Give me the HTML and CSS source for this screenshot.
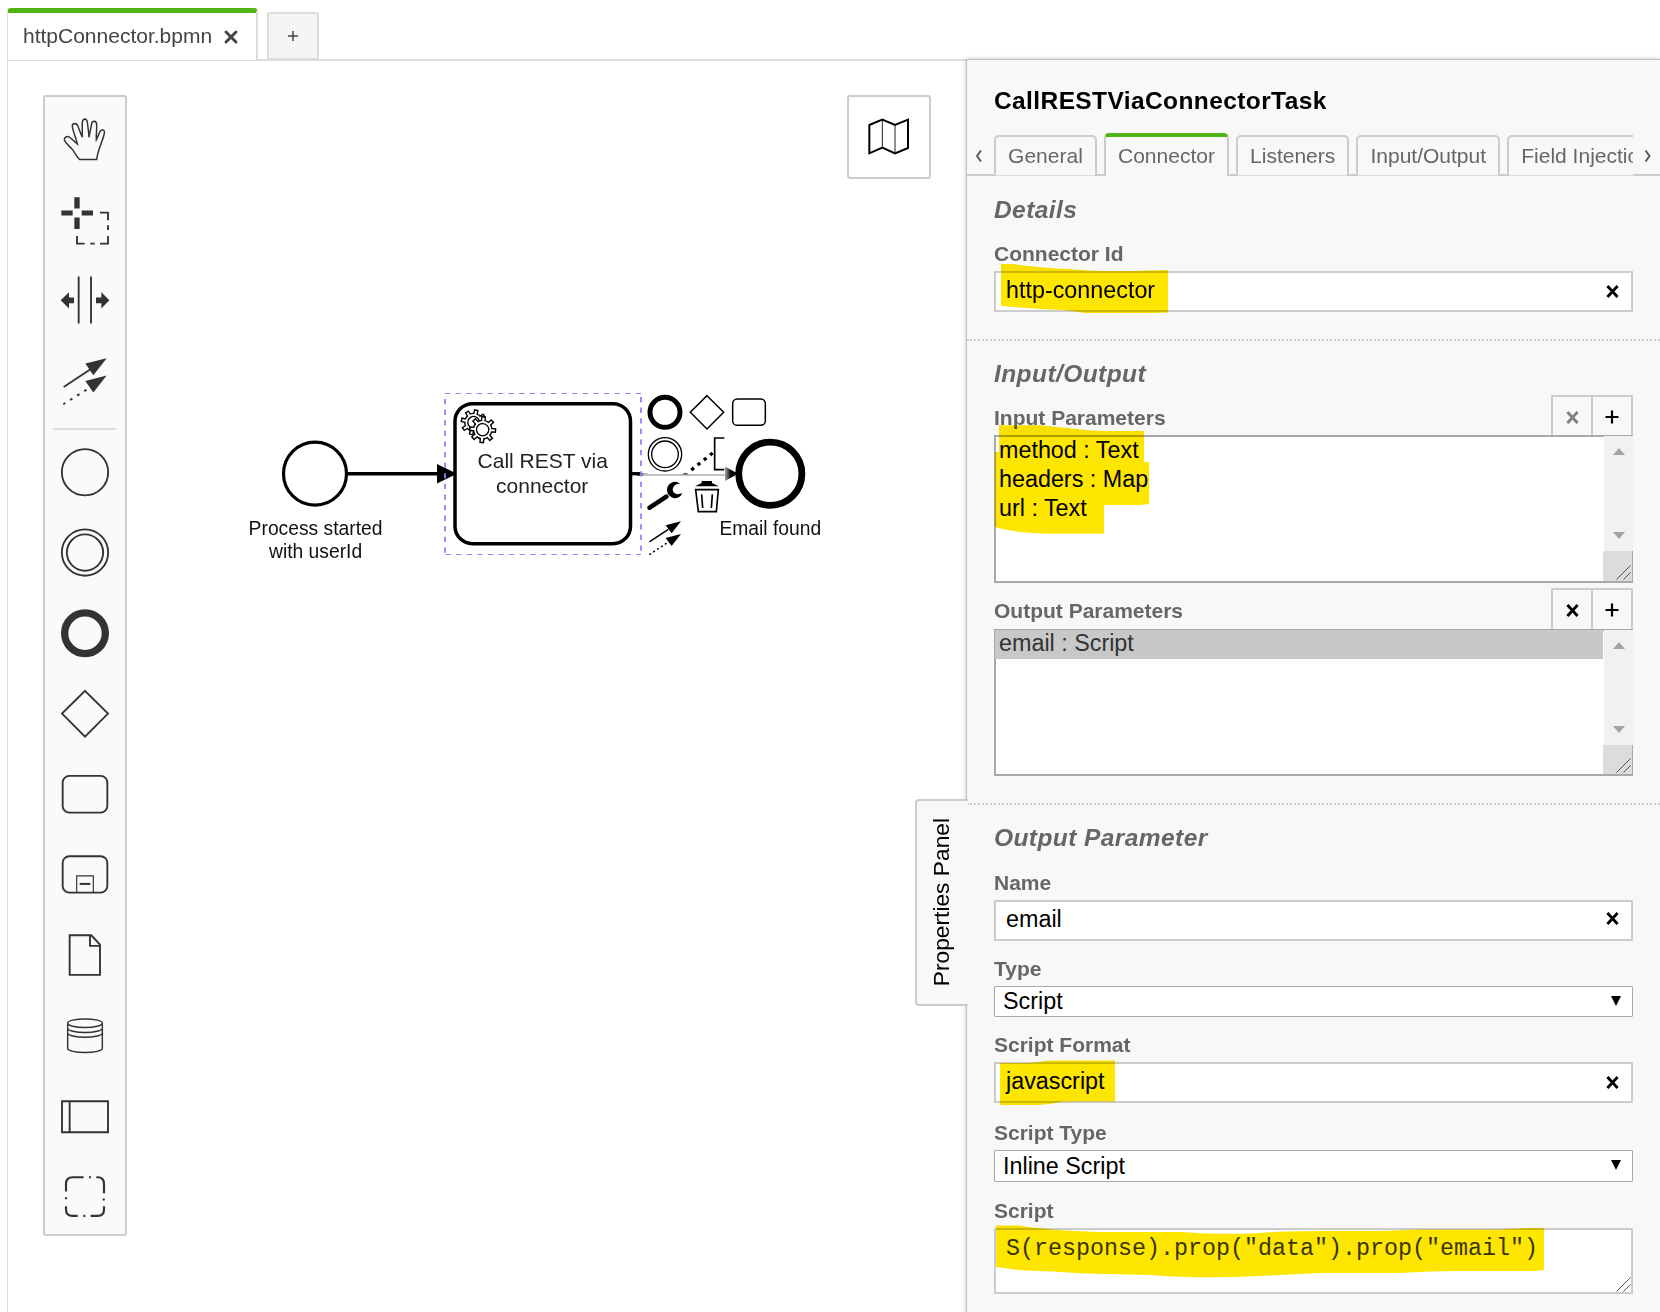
FILE: index.html
```html
<!DOCTYPE html>
<html lang="en">
<head>
<meta charset="utf-8">
<title>httpConnector.bpmn</title>
<link rel="stylesheet" href="styles.css">
</head>
<body>
<svg class="defs" width="0" height="0">
  <symbol id="cross" viewBox="0 0 12 12"><path d="M1.3 .9L10.7 11.1M10.7 .9L1.3 11.1" fill="none" stroke="currentColor" stroke-width="2.6"/></symbol>
  <symbol id="plus" viewBox="0 0 14 14"><path d="M0.500 7H13.500M7 0.500V13.500" fill="none" stroke="currentColor" stroke-width="2.200"/></symbol>
  <symbol id="grip" viewBox="0 0 15 15"><path d="M.5 14.500L14.500 .5M7.500 14.500L14.500 7.500" fill="none" stroke="#555" stroke-width="1"/></symbol>
</svg>

<header class="file-tabs">
  <div class="file-tab"><span>httpConnector.bpmn</span><svg class="file-close" viewBox="0 0 14 14"><path d="M2 2L12 12M12 2L2 12" fill="none" stroke="#444" stroke-width="2.900" stroke-linecap="round"/></svg></div>
  <div class="file-rest"><div class="file-add"><svg width="10" height="10" viewBox="0 0 10 10"><path d="M0 5H10M5 0V10" stroke="#444" stroke-width="1.500"/></svg></div></div>
</header>

<main class="editor">
  <section class="canvas">
    <svg class="diagram" viewBox="8 61 958 1251">
      <defs>
        <linearGradient id="fadeOut" gradientUnits="userSpaceOnUse" x1="638" y1="0" x2="648" y2="0"><stop offset="0" stop-color="#000"/><stop offset="1" stop-color="#c4c4c4"/></linearGradient>
        <linearGradient id="fadeIn" gradientUnits="userSpaceOnUse" x1="723" y1="0" x2="731" y2="0"><stop offset="0" stop-color="#ddd"/><stop offset="1" stop-color="#000"/></linearGradient>
        <g id="gear">
          <circle r="31" fill="#000"/>
          <g stroke="#000" stroke-width="15"><path d="M0-42V42M-42 0H42M-29.700-29.700L29.700 29.700M29.700-29.700L-29.700 29.700"/></g>
          <circle r="26.500" fill="#fff"/>
          <g stroke="#fff" stroke-width="6.500"><path d="M0-37.500V37.500M-37.500 0H37.500M-26.500-26.500L26.500 26.500M26.500-26.500L-26.500 26.500"/></g>
          <circle r="19" fill="#fff" stroke="#000" stroke-width="4"/>
        </g>
      </defs>

      <circle cx="315" cy="473.700" r="31.500" fill="#fff" stroke="#000" stroke-width="3.200"/>
      <path d="M348 473.700H440" stroke="#000" stroke-width="3.600"/>
      <path d="M437 464L457 473.700L437 483.500Z"/>
      <text class="caption" x="315.600" y="534.700">Process started</text>
      <text class="caption" x="315.600" y="557.700">with userId</text>

      <rect x="455" y="403.700" width="175.500" height="140" rx="17.500" fill="#fff" stroke="#000" stroke-width="3.500"/>
      <g transform="translate(430 380) scale(.33333)"><use href="#gear" transform="translate(131 127) rotate(12) scale(.93)"/><use href="#gear" transform="translate(158 149) rotate(4) scale(.97)"/></g>
      <text class="task-name" x="542.700" y="467.700">Call REST via</text>
      <text class="task-name" x="542.200" y="492.700">connector</text>

      <path d="M632 473.700H642" stroke="#000" stroke-width="3.300"/>
      <path d="M638 474H648V475H638Z" stroke="url(#fadeOut)" stroke-width="1.500"/>
      <path d="M643 475H730" stroke="#c4c4c4" stroke-width="2"/>
      <path d="M682 474.500Q685.500 471 689 474.500Z" fill="#555"/>
      <path d="M725 466.500L738 473.700L725 481Z" fill="url(#fadeIn)"/>
      <circle cx="770.300" cy="473.700" r="31.600" fill="#fff" stroke="#000" stroke-width="6.800"/>
      <text class="caption" x="770.300" y="535">Email found</text>

      <g stroke="#8888ff" fill="none" stroke-dasharray="5.300 5.300">
        <path d="M445 393.500H641M445.500 554.500H641" stroke-width="1"/>
        <path d="M445 399V554M641 397V554" stroke-width="1.800"/>
      </g>

      <g transform="translate(430 380) scale(.33333)" fill="none" stroke="#000">
        <circle cx="705" cy="97" r="45" stroke-width="15"/>
        <path d="M831 47L881 97L831 147L781 97Z" stroke-width="4.500"/>
        <rect x="908" y="57" width="98" height="79" rx="14" stroke-width="4.500"/>
        <circle cx="705" cy="223" r="50" stroke-width="4"/>
        <circle cx="705" cy="223" r="40" stroke-width="4"/>
        <path d="M883 174H854V269H883" stroke-width="5"/>
        <path d="M784 270L848 219" stroke-width="10" stroke-dasharray="10 14"/>
        <path d="M659 383L709 350" stroke-width="14" stroke-linecap="round"/>
        <path d="M750 311A24 24 0 0 0 711 330A24 24 0 0 0 757 340L742 343Q728 340 728 328Q730 316 742 312Z" fill="#000" stroke="none"/>
        <path d="M815 303H846V309L866 319H795L815 309Z" fill="#000" stroke="none"/>
        <path d="M797 329H865L859 395H805ZM815 343L818 384M847 343L844 384" stroke-width="5"/>
        <path d="M658 486L715 448" stroke-width="4.500"/>
        <path d="M658 524L715 486" stroke-width="4.500" stroke-dasharray="6 8"/>
        <path d="M753 424L707 436L725 460ZM753 462L707 474L725 498Z" fill="#000" stroke="none"/>
      </g>
    </svg>

    <nav class="palette">
      <svg class="entry" viewBox="135 297 240 240"><path stroke-width="4.500" d="M239 478H290C292 457 300 440 306 422C311 408 315 398 313 393C311 387 303 388 300 394C296 402 293 410 289 418C288 400 291 385 290 372C289 361 277 360 275 370C273 382 270 395 267 411C266 395 264 380 262 366C260 353 249 353 247 366C246 380 247 395 247 411C241 398 238 388 233 376C229 367 216 369 217 378C219 396 228 412 232 431C224 424 216 417 209 411C202 406 192 411 193 419C198 432 210 438 218 449C226 460 230 469 239 478Z"/></svg>
      <svg class="entry" viewBox="135 539 240 240"><path class="solid" d="M223 590H239V624H223ZM223 651H239V685H223ZM184 630H218V645H184ZM245 630H279V645H245Z"/><path d="M300 636H324V659M324 674V688M324 706V729H300M284 729H271M254 729H231V706"/></svg>
      <svg class="entry" viewBox="45 1 240 240"><path d="M146 50V191M183 50V191"/><path class="solid" d="M92 121L117 97V113H132V130H117V146ZM238 121L214 97V113H198V130H214V146Z"/></svg>
      <svg class="entry" viewBox="45 243 240 240"><path d="M101 380L185 325"/><path d="M100 432L172 387" stroke-dasharray="8 17" stroke-width="6" stroke-dashoffset="1"/><path class="solid" d="M230 294L166 310L190 345ZM230 346L166 362L190 397Z"/></svg>
      <hr class="palette-line">
      <svg class="entry" viewBox="45 517 240 240"><circle cx="165" cy="637" r="69.500"/></svg>
      <svg class="entry" viewBox="45 759 240 240"><circle cx="165" cy="877" r="69.500"/><circle cx="165" cy="877" r="54.500"/></svg>
      <svg class="entry" viewBox="45 1000 240 240"><circle cx="165" cy="1120" r="61" stroke-width="22"/></svg>
      <svg class="entry" viewBox="45 12 240 240"><path d="M165 62L234 130L165 199L96 130Z"/></svg>
      <svg class="entry" viewBox="45 253 240 240"><rect x="98" y="318" width="134" height="110" rx="20"/></svg>
      <svg class="entry" viewBox="45 495 240 240"><rect x="98" y="558" width="134" height="109" rx="20"/><path d="M140 667V617H190V667" stroke-width="3.500"/><path d="M149 641H181" stroke-width="6"/></svg>
      <svg class="entry" viewBox="45 736 240 240"><path d="M119 796H184L210 824V915H119ZM180 796V828H210"/></svg>
      <svg class="entry" viewBox="45 108 240 240"><path stroke-width="4.300" d="M113 188A52 12 0 0 1 217 188V265A52 12 0 0 1 113 265ZM113 188A52 14 0 0 0 217 188M113 204A52 13 0 0 0 217 204M113 218A52 13 0 0 0 217 218"/></svg>
      <svg class="entry" viewBox="45 349 240 240"><path d="M96 424H234V517H96ZM119 424V517"/></svg>
      <svg class="entry" viewBox="45 591 240 240"><path stroke-width="6.500" d="M161 651H128Q108 651 108 671V694M108 711V717M108 738V748Q108 767 128 767H143M160 767H166M182 767H203Q222 767 222 748V738M221 721V715M222 699V671Q222 651 203 651H199M183 651H177"/></svg>
    </nav>

    <div class="minimap"><svg viewBox="27 141 240 240" width="80" height="80"><path d="M88 225L127 209L165 225L204 209V294L165 310L127 293L88 310Z" fill="none" stroke="#000" stroke-width="6"/><path d="M127 209V293M165 225V310" stroke="#222" stroke-width="3"/></svg></div>

    <div class="panel-toggle"><span>Properties Panel</span></div>
  </section>

  <aside class="panel">
    <h1 class="title">CallRESTViaConnectorTask</h1>
    <div class="tabs">
      <div class="scroll"><svg width="8" height="14" viewBox="0 0 8 14"><path d="M6 1.500L2 7L6 12.500" fill="none" stroke="#555" stroke-width="1.900"/></svg></div>
      <div class="tab-strip">
        <div class="tab">General</div><i></i><div class="tab active">Connector</div><i></i><div class="tab">Listeners</div><i></i><div class="tab">Input/Output</div><i></i><div class="tab">Field Injections</div>
      </div>
      <div class="scroll end"><svg width="8" height="14" viewBox="0 0 8 14"><path d="M1.500 1.500L5.500 7L1.500 12.500" fill="none" stroke="#555" stroke-width="1.900"/></svg></div>
    </div>

    <section class="group details">
      <h2>Details</h2>
      <div class="field first">
        <label>Connector Id</label>
        <div class="input">http-connector<svg class="x"><use href="#cross"/></svg>
          <svg class="marker" viewBox="994 271 639 41"><path d="M1001 264H1013C1040 268 1070 269 1100 271L1130 271L1168 270V312.500L1150 313H1085C1070 310 1055 309.500 1040 309L1001 306Z"/></svg></div>
      </div>
    </section>

    <section class="group io">
      <h2>Input/Output</h2>
      <div class="list-head one"><label>Input Parameters</label><div class="buttons"><span class="off"><svg class="x"><use href="#cross"/></svg></span><span><svg class="p"><use href="#plus"/></svg></span></div></div>
      <div class="listbox">
        <ul><li>method : Text</li><li>headers : Map</li><li>url : Text</li></ul>
        <div class="bar"><b class="up"></b><b class="down"></b><div class="corner"><svg width="15" height="15"><use href="#grip"/></svg></div></div>
        <svg class="marker" viewBox="994 435 639 148"><path d="M999 425.300H1040C1060 427 1080 430 1100 431H1144V462H1149V504L1140 505H1104V533.700H1050Q1015 533 995 527V452H999Z"/></svg>
      </div>
      <div class="list-head two"><label>Output Parameters</label><div class="buttons"><span><svg class="x"><use href="#cross"/></svg></span><span><svg class="p"><use href="#plus"/></svg></span></div></div>
      <div class="listbox short">
        <ul><li class="selected">email : Script</li></ul>
        <div class="bar"><b class="up"></b><b class="down"></b><div class="corner"><svg width="15" height="15"><use href="#grip"/></svg></div></div>
      </div>
    </section>

    <section class="group param">
      <h2>Output Parameter</h2>
      <div class="field name">
        <label>Name</label>
        <div class="input">email<svg class="x raised"><use href="#cross"/></svg></div>
      </div>
      <div class="field">
        <label>Type</label>
        <div class="select">Script<svg class="arrow" viewBox="0 0 10 10"><path d="M0 0H10L5 10Z"/></svg></div>
      </div>
      <div class="field">
        <label>Script Format</label>
        <div class="input">javascript<svg class="x"><use href="#cross"/></svg>
          <svg class="marker" viewBox="994 1062 639 41"><path d="M1000 1063H1028Q1040 1062 1048 1060.500H1115V1101.500H1063Q1050 1104.500 1038 1105H1000Z"/></svg></div>
      </div>
      <div class="field wide">
        <label>Script Type</label>
        <div class="select tall">Inline Script<svg class="arrow" viewBox="0 0 10 10"><path d="M0 0H10L5 10Z"/></svg></div>
      </div>
      <div class="field script">
        <label>Script</label>
        <div class="textarea"><code>S(response).prop("data").prop("email")</code><svg class="grip" width="15" height="15"><use href="#grip"/></svg>
          <svg class="marker" viewBox="994 1228 639 66"><path d="M996 1225.500H1018C1040 1229 1070 1231 1097 1232H1180C1200 1233 1220 1235 1260 1233Q1280 1231 1320 1231L1380 1231L1420 1229.500H1500L1528 1228H1544V1270L1535 1271H1460Q1430 1271 1400 1273H1320L1260 1276Q1200 1279 1150 1275L1085 1273.500Q1050 1271 1025 1270.500Q1010 1269 996 1267Z"/></svg></div>
      </div>
    </section>
  </aside>
</main>
</body>
</html>
```
FILE: styles.css
```css
* { box-sizing: border-box; }
body { margin: 0; width: 1660px; height: 1312px; overflow: hidden; background: #fff; font-family: "Liberation Sans", Arial, sans-serif; color: #000; }
svg { display: block; overflow: visible; }
.defs { position: absolute; }

/* file tabs */
.file-tabs { display: flex; height: 61px; padding: 8px 0 0 7px; }
.file-tab { display: flex; align-items: center; width: 251px; padding: 0 0 1px 15px; border: solid #ddd; border-width: 5px 2px 1px 1px; border-top-color: #52b415; border-radius: 4px 4px 0 0; font-size: 21px; color: #444; }
.file-close { width: 14px; height: 14px; margin: 1px 0 0 12px; }
.file-rest { flex: 1; border-bottom: 2px solid #ddd; padding: 4px 0 0 9px; }
.file-add { display: flex; align-items: center; justify-content: center; width: 52px; height: 48px; border: 2px solid #ddd; border-radius: 3px 3px 0 0; background: #f5f5f5; }

.editor { display: flex; height: 1251px; padding-left: 7px; }
.canvas { position: relative; width: 959px; border-left: 1px solid #ddd; }
.diagram { width: 958px; height: 1251px; }
.caption { font-size: 19.3px; text-anchor: middle; fill: #111; }
.task-name { font-size: 21px; text-anchor: middle; fill: #222; }

/* palette */
.palette { position: absolute; left: 35px; top: 34px; width: 84px; height: 1141px; padding-top: 2px; border: 2px solid #ccc; border-radius: 3px; background: #fafafa; }
.entry { width: 80px; height: 80.5px; fill: none; stroke: #333; stroke-width: 5.6; }
.entry .solid { fill: #333; stroke: none; }
.palette-line { width: 63px; height: 2px; margin: 7px auto 2px 8px; border: 0; background: #ddd; }

.minimap { position: absolute; left: 839px; top: 34px; width: 84px; height: 84px; border: 2px solid #ccc; border-radius: 3px; background: #fff; }
.panel-toggle { position: absolute; z-index: 2; left: 907px; top: 738px; width: 53px; height: 207px; padding-right: 2px; display: flex; justify-content: center; align-items: center; border: 2px solid #ccc; border-right: 0; border-radius: 4px 0 0 4px; background: #f8f8f8; font-size: 22.75px; }
.panel-toggle span { writing-mode: vertical-rl; transform: rotate(180deg); }

/* properties panel */
.panel { flex: 1; margin-top: -2px; height: 1253px; padding-top: 27px; border: solid #c0c0c0; border-width: 1px 0 0 1px; background: #f8f8f8; box-shadow: 0 0 4px rgba(0,0,0,.25); }
.title { margin: 0 0 0 27px; font-size: 24.5px; line-height: 28px; letter-spacing: .4px; }
.tabs { display: flex; height: 43px; margin-top: 18px; }
.scroll { width: 27px; padding: 16px 0 0 8px; border-bottom: 2px solid #ccc; }
.scroll.end { padding-left: 11px; }
.tab-strip { display: flex; width: 639px; overflow: hidden; align-items: flex-end; font-size: 21px; color: #666; }
.tab-strip i { flex: none; width: 7px; border-bottom: 2px solid #ccc; }
.tab { flex: none; height: 41px; padding: 0 12.1px; border: solid #ccc; border-width: 2px 2px 0; border-radius: 5px 5px 0 0; line-height: 38px; box-shadow: inset 0 -1px #ddd; }
.tab.active { height: 43px; border-top: 4px solid #52b415; box-shadow: none; }

.group { padding: 0 27px; }
.group + .group { border-top: 2px dotted #ccc; }
.details { height: 163px; padding-top: 20px; }
.io { height: 464px; padding-top: 19px; }
.param { padding-top: 19px; }
h2 { margin: 0; font-size: 24.5px; line-height: 28px; font-style: italic; letter-spacing: .42px; color: #666; }
label { display: block; font-size: 21px; line-height: 24px; font-weight: bold; color: #666; }
.field { margin-top: 16px; }
.field label { margin-bottom: 5px; }
.field.first { margin-top: 18px; }
.field.name { margin-top: 19px; }
.field.wide { margin-top: 18px; }
.field.script { margin-top: 17px; }
.input, .select, .textarea, .listbox { position: relative; width: 639px; background: #fff; font-size: 23.33px; }
.input { display: flex; align-items: center; justify-content: space-between; height: 41px; padding: 0 12px 2px 10px; border: 2px solid #ccc; line-height: 35px; }
.x { width: 13px; height: 13px; margin-top: 1px; }
.raised { margin: 0 0 2px; }
.p { width: 14px; height: 14px; }
.select { display: flex; align-items: center; justify-content: space-between; height: 31px; padding: 0 11px 0 8px; border: 1px solid #a9a9a9; border-radius: 1px; }
.select.tall { height: 32px; }
.arrow { width: 10px; height: 10px; margin-bottom: 2px; }
.textarea { height: 66px; padding: 4px 10px; border: 2px solid #ccc; }
.textarea code { font: 23.33px/26px "Liberation Mono", monospace; color: #3a3a3a; }
.textarea .grip { position: absolute; right: 0; bottom: 0; }

.list-head { display: flex; justify-content: space-between; align-items: flex-start; }
.list-head label { padding-top: 11px; }
.list-head.one { height: 40px; margin-top: 7px; }
.list-head.two { height: 41px; margin-top: 5px; }
.buttons { display: flex; width: 82px; height: 100%; border: 2px solid #ccc; border-bottom: 0; }
.buttons span { display: flex; align-items: center; justify-content: center; width: 38px; padding-top: 1px; }
.buttons span + span { width: 40px; border-left: 2px solid #ccc; }
.buttons .off { color: #808080; }
.listbox { display: flex; height: 148px; border: 2px solid #a9a9a9; }
.listbox.short { height: 147px; }
.listbox ul { flex: 1; list-style: none; margin: -1px 0 0 -1px; padding: 0; }
.listbox li { height: 29px; padding-left: 4px; line-height: 28px; }
.listbox .selected { line-height: 26px; background: #c8c8c8; color: #333; }
.bar { display: flex; flex-direction: column; align-items: center; width: 29px; margin: -1px -2px 0 1px; background: #f1f1f1; }
.bar b { border: solid transparent; border-width: 0 6.5px; }
.bar .up { margin-top: 12px; border-bottom: 7px solid #a3a3a3; }
.bar .down { margin-top: 77px; border-top: 7px solid #a3a3a3; }
.corner { display: flex; align-items: flex-end; justify-content: flex-end; width: 30px; height: 30px; margin: 12px 0 0 -1px; padding: 0 1px 1px 0; border-right: 1px solid #a9a9a9; background: #dcdcdc; }

/* marker strokes laid over the values */
.marker { position: absolute; left: -2px; top: -2px; width: 639px; height: calc(100% + 4px); fill: #ffe600; mix-blend-mode: multiply; }
```
